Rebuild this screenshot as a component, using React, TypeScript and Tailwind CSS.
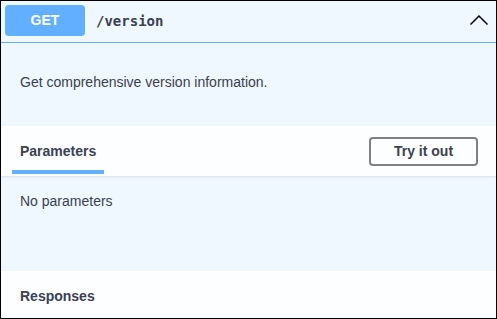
export default function App() {
  return (
    <div className="w-[497px] h-[319px] border border-black bg-[#eff7ff] flex flex-col font-['Liberation_Sans',Arial,sans-serif] text-[#3b4151]">
      {/* summary */}
      <div className="h-[42px] shrink-0 flex items-start pt-[4px] pl-[4px] pr-[7px] border-b border-[#61affe]">
        <div className="w-[80px] h-[31px] rounded-[4px] bg-[#61affe] text-white text-[14px] font-bold flex items-center justify-center">
          GET
        </div>
        <span className="ml-[11px] mt-[6px] font-['DejaVu_Sans_Mono',monospace] font-bold text-[14px] leading-[20px]">
          /version
        </span>
        <svg className="ml-auto mt-[9px]" width="20" height="12" viewBox="0 0 20 12">
          <polyline points="1.5,10.5 10,2 18.5,10.5" fill="none" stroke="#000" strokeWidth="1.5" />
        </svg>
      </div>

      {/* description */}
      <div className="h-[83px] shrink-0 pl-[19px] pt-[29px] text-[14px] leading-[20px]">
        Get comprehensive version information.
      </div>

      {/* parameters header */}
      <div className="h-[50px] shrink-0 bg-[#fcfeff] shadow-[0_1px_2px_rgba(0,0,0,0.1)] relative z-10 flex items-center justify-between">
        <div className="ml-[11px] self-start pt-[15px] px-[8px] flex flex-col">
          <span className="text-[14px] leading-[20px] font-bold">Parameters</span>
          <div className="mt-[9px] h-[4px] -mx-[8px] bg-[#61affe]" />
        </div>
        <button className="mr-[18px] w-[109px] h-[29px] rounded-[4px] border-2 border-[#808080] bg-transparent text-[14px] font-bold flex items-center justify-center">
          Try it out
        </button>
      </div>

      {/* parameters body */}
      <div className="h-[95px] shrink-0 pl-[19px] pt-[15px] text-[14px] leading-[20px]">
        No parameters
      </div>

      {/* responses header */}
      <div className="flex-1 bg-[#fcfeff] pl-[19px] pt-[13px]">
        <span className="text-[14px] leading-[20px] font-bold">Responses</span>
      </div>
    </div>
  );
}
